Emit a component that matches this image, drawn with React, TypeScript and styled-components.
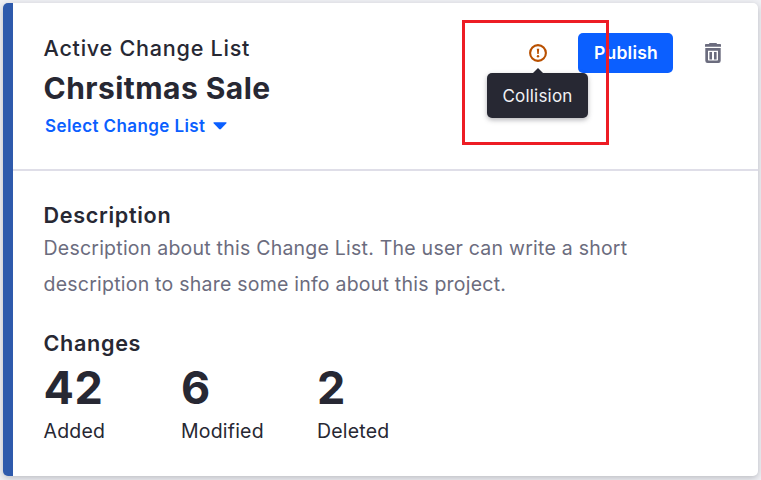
import React from "react";
import styled, { createGlobalStyle } from "styled-components";

const GlobalStyle = createGlobalStyle`
  * { box-sizing: border-box; }
  body {
    margin: 0;
    background: #f0f1f5;
    font-family: Inter, "Liberation Sans", sans-serif;
    color: #272833;
    overflow: hidden;
  }
  h1, h2, p, dl, dt, dd { margin: 0; }
`;

const Page = styled.main`
  position: relative;
  height: 480px;
  padding: 3px 3px 4px;
  overflow: hidden;
`;

const Card = styled.article`
  height: 473px;
  display: flex;
  flex-direction: column;
  background: #fff;
  border-left: 10px solid #2e5aac;
  border-radius: 5px;
  box-shadow: 0 2px 7px rgba(39, 40, 51, 0.27);
`;

const Header = styled.header`
  height: 168px;
  display: flex;
  justify-content: space-between;
  padding: 30px 37px 0 30.5px;
  border-bottom: 2px solid #dfdee8;
`;

const Body = styled.section`
  padding: 29px 30.5px 0;
`;

const SectionTitle = styled.h2`
  font-size: 21.6px;
  font-weight: 600;
  line-height: 30px;
  letter-spacing: 0.68px;
  white-space: nowrap;
`;

const Eyebrow = styled(SectionTitle)`
  font-weight: 500;
  letter-spacing: 0.74px;
`;

const Title = styled.h1`
  font-size: 30px;
  font-weight: 700;
  line-height: 51px;
  letter-spacing: 0.45px;
`;

const Selector = styled.button`
  display: flex;
  align-items: center;
  gap: 8px;
  padding: 0 0 0 1.5px;
  border: 0;
  background: none;
  color: #0b5fff;
  font: 600 17px/24px Inter, sans-serif;
  letter-spacing: 0.4px;
`;

const Description = styled.p`
  max-width: 640px;
  color: #6b6c7e;
  font-size: 19.5px;
  line-height: 36px;
  letter-spacing: 0.23px;
  margin: 0 0 26px;
`;

const Actions = styled.div`
  display: flex;
  align-items: center;
  height: 40px;
`;

const Warning = styled.div`
  position: relative;
  display: flex;
  margin-right: 31px;
`;

const Tooltip = styled.div`
  position: absolute;
  z-index: 1;
  top: 29px;
  left: -42px;
  width: 101px;
  height: 45px;
  display: grid;
  place-items: center;
  border-radius: 5px;
  background: #272833;
  color: #f1f2f5;
  font-size: 17px;
  letter-spacing: 0.2px;
  box-shadow: 0 2px 5px rgba(39, 40, 51, 0.35);

  &::before {
    content: "";
    position: absolute;
    top: -5px;
    left: 46px;
    border: 5px solid transparent;
    border-top: 0;
    border-bottom-color: #272833;
  }
`;

const PublishButton = styled.button`
  width: 95px;
  height: 40px;
  padding: 0 0 0 1px;
  border: 0;
  border-radius: 5px;
  background: #0b5fff;
  color: #fff;
  font: 600 17.5px/40px Inter, sans-serif;
  letter-spacing: 0.25px;
`;

const DeleteButton = styled.button`
  display: flex;
  margin-left: 32px;
  padding: 0;
  border: 0;
  background: none;
`;

const Stats = styled.dl`
  display: grid;
  grid-template-columns: 137.5px 136px 1fr;
`;

const Stat = styled.div`
  display: flex;
  flex-direction: column-reverse;
`;

const StatLabel = styled.dt`
  font-size: 19.5px;
  line-height: 27px;
  letter-spacing: 0.2px;
`;

const StatValue = styled.dd`
  font-size: 45px;
  font-weight: 700;
  line-height: 60px;
  letter-spacing: 0.6px;
`;

const Highlight = styled.div`
  position: absolute;
  z-index: 2;
  left: 462px;
  top: 20px;
  width: 147px;
  height: 125px;
  border: 3px solid #ed1c24;
  pointer-events: none;
`;

const stats = [
  { label: "Added", value: 42 },
  { label: "Modified", value: 6 },
  { label: "Deleted", value: 2 },
];

const WarningIcon = () => (
  <svg width="18" height="18" viewBox="0 0 18 18" fill="none">
    <circle cx="9" cy="9" r="7.9" stroke="#b95000" strokeWidth="2.1" />
    <path d="M7.8 4.7h2.4l-.5 5.4H8.3z" fill="#b95000" />
    <circle cx="9" cy="12.2" r="1.2" fill="#b95000" />
  </svg>
);

const TrashIcon = () => (
  <svg width="16" height="20" viewBox="0 0 16 20">
    <path
      fill="#6b6c7e"
      d="M.8 1h3.2Q4 0 5 0h6q1 0 1 1h3.2q.8 0 .8.8V3.8H0V1.8Q0 1 .8 1Z"
    />
    <path
      fill="#6b6c7e"
      fillRule="evenodd"
      d="M.3 5h15.4v12.7q0 2.3-2.3 2.3H2.6Q.3 20 .3 17.7ZM3 7.7v9.1q0 .6.6.6h8.8q.6 0 .6-.6V7.7Z"
    />
    <path fill="#6b6c7e" d="M4.4 9h2.6v7.4H4.4zM9 9h2.6v7.4H9z" />
  </svg>
);

const CaretIcon = () => (
  <svg width="14" height="8" viewBox="0 0 14 8">
    <path fill="#0b5fff" d="M1 .3h12q1.1 0 .4.9L7.9 7.1q-.9.8-1.8 0L.6 1.2Q-.1.3 1 .3Z" />
  </svg>
);

export default function App() {
  return (
    <Page>
      <GlobalStyle />
      <Card>
        <Header>
          <div>
            <Eyebrow>Active Change List</Eyebrow>
            <Title>Chrsitmas Sale</Title>
            <Selector>
              Select Change List
              <CaretIcon />
            </Selector>
          </div>
          <Actions>
            <Warning>
              <WarningIcon />
              <Tooltip role="tooltip">Collision</Tooltip>
            </Warning>
            <PublishButton>Publish</PublishButton>
            <DeleteButton aria-label="Delete">
              <TrashIcon />
            </DeleteButton>
          </Actions>
        </Header>
        <Body>
          <SectionTitle>Description</SectionTitle>
          <Description>
            Description about this Change List. The user can write a short
            description to share some info about this project.
          </Description>
          <SectionTitle>Changes</SectionTitle>
          <Stats>
            {stats.map(({ label, value }) => (
              <Stat key={label}>
                <StatLabel>{label}</StatLabel>
                <StatValue>{value}</StatValue>
              </Stat>
            ))}
          </Stats>
        </Body>
      </Card>
      <Highlight />
    </Page>
  );
}
